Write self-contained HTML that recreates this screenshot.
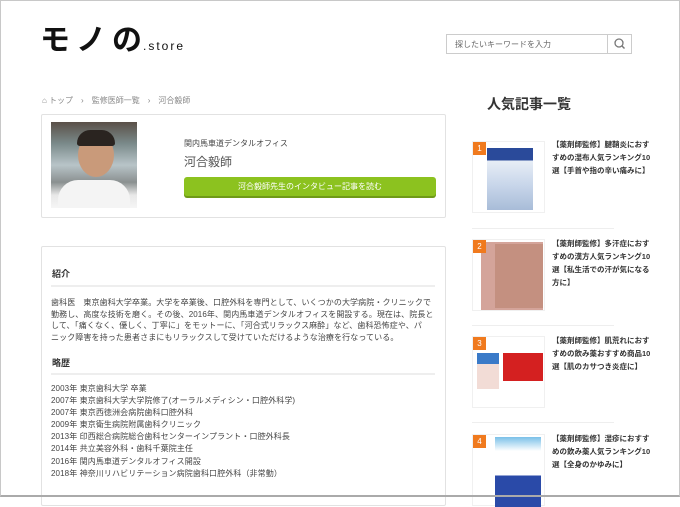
<!DOCTYPE html>
<html><head><meta charset="utf-8"><style>
*{margin:0;padding:0;box-sizing:border-box}
body{width:680px;height:497px;overflow:hidden;background:#fff;font-family:"Liberation Sans","Noto Sans CJK JP",sans-serif;color:#333;position:relative}
.frame{position:absolute;left:0;top:0;width:680px;height:497px;border:1px solid #c8c8c8;border-bottom:2px solid #aaa}
.abs{position:absolute}
.logo{left:40px;top:15px;font-size:30px;font-weight:bold;letter-spacing:6px;color:#111;white-space:nowrap}
.logo small{font-size:12px;letter-spacing:2px;font-weight:normal;margin-left:-5px}
.search{left:446px;top:34px;width:186px;height:20px;border:1px solid #ccc}
.search span{position:absolute;left:8px;top:4px;font-size:8px;color:#666}
.search i{position:absolute;right:0;top:0;width:24px;height:18px;border-left:1px solid #ccc}
.bc{left:42px;top:95px;font-size:8px;color:#888;white-space:nowrap}
.card{border:1px solid #e2e2e2;border-radius:2px;background:#fff}
.photo{left:51px;top:122px;width:86px;height:86px;background:linear-gradient(#5a5048 0,#7a8a8a 25%,#b8c4c8 50%,#8a9090 70%,#e8e8e8 85%,#f5f5f5 100%)}
.head{left:78px;top:133px;width:36px;height:44px;border-radius:50%;background:#c99a7a}
.hair{left:77px;top:130px;width:38px;height:16px;border-radius:19px 19px 4px 4px;background:#2a2420}
.body2{left:58px;top:180px;width:72px;height:28px;border-radius:20px 20px 0 0;background:#f4f4f4}
.btn{left:184px;top:177px;width:252px;height:19px;background:#8cc21f;border-radius:3px;box-shadow:0 2px 0 #6f9a18;color:#fff;font-size:8px;text-align:center;line-height:19px}
.h{font-size:9px;font-weight:bold;color:#333}
.hr{height:2px;background:#eee;width:384px}
.p{font-size:8px;line-height:11.6px;color:#444;white-space:nowrap;letter-spacing:0.1px}
.side{left:487px;top:94px;font-size:14px;font-weight:bold;color:#333}
.th{width:73px;height:72px;border:1px solid #f0f0f0;background:#fff}
.badge{position:absolute;left:0;top:0;width:13px;height:13px;background:#f07a1e;color:#fff;font-size:8px;text-align:center;line-height:13px}
.it{font-size:7.5px;font-weight:bold;line-height:13px;color:#333;white-space:nowrap}
.sep{left:472px;width:142px;height:1px;background:#eee}
</style></head><body>
<div class="abs logo">モノの<small>.store</small></div>
<div class="abs search"><span>探したいキーワードを入力</span><i><svg width="24" height="18"><circle cx="11" cy="8" r="4" fill="none" stroke="#777" stroke-width="1.3"/><line x1="14" y1="11" x2="16.5" y2="13.5" stroke="#777" stroke-width="1.4"/></svg></i></div>
<div class="abs bc">⌂ トップ　›　監修医師一覧　›　河合毅師</div>
<div class="abs card" style="left:41px;top:114px;width:405px;height:104px"></div>
<div class="abs photo"></div><div class="abs body2"></div><div class="abs head"></div><div class="abs hair"></div>
<div class="abs" style="left:184px;top:138px;font-size:8px;color:#444">関内馬車道デンタルオフィス</div>
<div class="abs" style="left:184px;top:153px;font-size:12px;color:#555">河合毅師</div>
<div class="abs btn">河合毅師先生のインタビュー記事を読む</div>
<div class="abs card" style="left:41px;top:246px;width:405px;height:260px"></div>
<div class="abs h" style="left:52px;top:267px">紹介</div>
<div class="abs hr" style="left:51px;top:285px"></div>
<div class="abs p" style="left:51px;top:297px">歯科医　東京歯科大学卒業。大学を卒業後、口腔外科を専門として、いくつかの大学病院・クリニックで<br>勤務し、高度な技術を磨く。その後、2016年、関内馬車道デンタルオフィスを開設する。現在は、院長と<br>して、「痛くなく、優しく、丁寧に」をモットーに、「河合式リラックス麻酔」など、歯科恐怖症や、パ<br>ニック障害を持った患者さまにもリラックスして受けていただけるような治療を行なっている。</div>
<div class="abs h" style="left:52px;top:356px">略歴</div>
<div class="abs hr" style="left:51px;top:373px"></div>
<div class="abs p" style="left:51px;top:383px;line-height:12.1px">2003年 東京歯科大学 卒業<br>2007年 東京歯科大学大学院修了(オーラルメディシン・口腔外科学)<br>2007年 東京西徳洲会病院歯科口腔外科<br>2009年 東京衛生病院附属歯科クリニック<br>2013年 印西総合病院総合歯科センターインプラント・口腔外科長<br>2014年 共立美容外科・歯科千葉院主任<br>2016年 関内馬車道デンタルオフィス開設<br>2018年 神奈川リハビリテーション病院歯科口腔外科（非常勤）</div>
<div class="abs side">人気記事一覧</div>

<div class="abs th" style="left:472px;top:141px"><div style="position:absolute;left:14px;top:6px;width:46px;height:62px;background:linear-gradient(#2a4a9a 0,#2a4a9a 20%,#e8eef6 20%,#c8d6ea 60%,#a8bcd8 100%)"></div><div class="badge">1</div></div>
<div class="abs it" style="left:552px;top:138px">【薬剤師監修】腱鞘炎におす<br>すめの湿布人気ランキング10<br>選【手首や指の辛い痛みに】</div>
<div class="abs sep" style="top:228px"></div>
<div class="abs th" style="left:472px;top:239px"><div style="position:absolute;left:8px;top:2px;width:62px;height:68px;background:#d4a49a"></div><div style="position:absolute;left:22px;top:4px;width:48px;height:64px;background:#c49080"></div><div class="badge">2</div></div>
<div class="abs it" style="left:552px;top:237px">【薬剤師監修】多汗症におす<br>すめの漢方人気ランキング10<br>選【私生活での汗が気になる<br>方に】</div>
<div class="abs sep" style="top:325px"></div>
<div class="abs th" style="left:472px;top:336px"><div style="position:absolute;left:4px;top:16px;width:22px;height:36px;background:linear-gradient(#3a7ac8 0,#3a7ac8 30%,#f2dcd6 30%)"></div><div style="position:absolute;left:30px;top:16px;width:40px;height:28px;background:#d42020"></div><div class="badge">3</div></div>
<div class="abs it" style="left:552px;top:334px">【薬剤師監修】肌荒れにおす<br>すめの飲み薬おすすめ商品10<br>選【肌のカサつき炎症に】</div>
<div class="abs sep" style="top:422px"></div>
<div class="abs th" style="left:472px;top:434px"><div style="position:absolute;left:22px;top:2px;width:46px;height:70px;background:linear-gradient(#7ac0e8 0,#fff 20%,#fff 55%,#2a4aa8 55%)"></div><div class="badge">4</div></div>
<div class="abs it" style="left:552px;top:432px">【薬剤師監修】湿疹におすす<br>めの飲み薬人気ランキング10<br>選【全身のかゆみに】</div>
<div class="frame"></div>
</body></html>
